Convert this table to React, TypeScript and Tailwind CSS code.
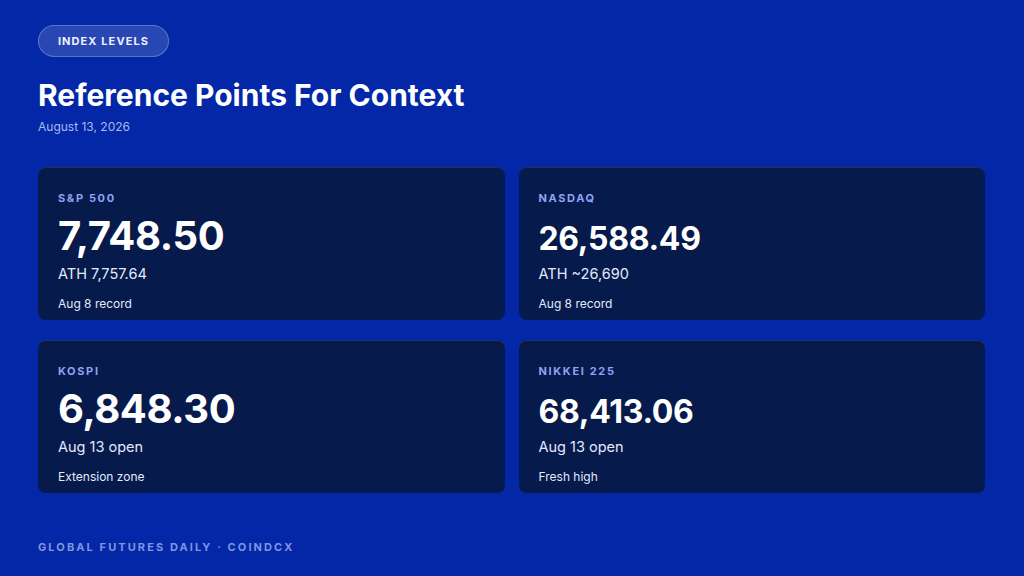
const cards = [
  { label: 'S&P 500', value: '7,748.50', big: true, sub: 'ATH 7,757.64', note: 'Aug 8 record' },
  { label: 'NASDAQ', value: '26,588.49', big: false, sub: 'ATH ~26,690', note: 'Aug 8 record' },
  { label: 'KOSPI', value: '6,848.30', big: true, sub: 'Aug 13 open', note: 'Extension zone' },
  { label: 'NIKKEI 225', value: '68,413.06', big: false, sub: 'Aug 13 open', note: 'Fresh high' },
];

function IndexCard({ label, value, big, sub, note }: (typeof cards)[number]) {
  return (
    <div className="flex h-[153px] flex-col rounded-lg border-t border-white/10 bg-[#061a4b] px-5 pt-[22px]">
      <p className="text-[11px] font-bold leading-4 tracking-[0.15em] text-[#8fa3f2]">{label}</p>
      <p className={big ? 'mt-[7px] text-[40px] font-bold leading-[46px] tracking-[-0.01em] text-white' : 'mt-[13px] text-[32px] font-bold leading-[40px] tracking-[-0.01em] text-white'}>
        {value}
      </p>
      <p className="mt-[5px] text-[14.5px] leading-5 text-[#e4e9fb]">{sub}</p>
      <p className="mt-[12px] text-[12px] leading-4 text-[#e4e9fb]">{note}</p>
    </div>
  );
}

export default function App() {
  return (
    <div className="flex h-[576px] w-[1024px] flex-col bg-[#0327a6] px-[38px] pt-[25px] font-['Inter',sans-serif] text-white">
      <div className="flex">
        <span className="flex h-[32px] w-[131px] items-center justify-center rounded-full border border-white/25 bg-white/15 text-[11px] font-bold tracking-[0.1em] text-[#eef1fd]">
          INDEX LEVELS
        </span>
      </div>
      <h1 className="mt-[20px] text-[30px] font-bold leading-9">Reference Points For Context</h1>
      <p className="mt-[6px] text-[12px] leading-4 text-[#a9b8f0]">August 13, 2026</p>
      <div className="mt-[32px] grid grid-cols-2 gap-x-[14px] gap-y-[20px] pr-px">
        {cards.map(c => <IndexCard key={c.label} {...c} />)}
      </div>
      <p className="mt-[46px] text-[11px] font-bold tracking-[0.19em] text-[#7f95e2]">GLOBAL FUTURES DAILY · COINDCX</p>
    </div>
  );
}
